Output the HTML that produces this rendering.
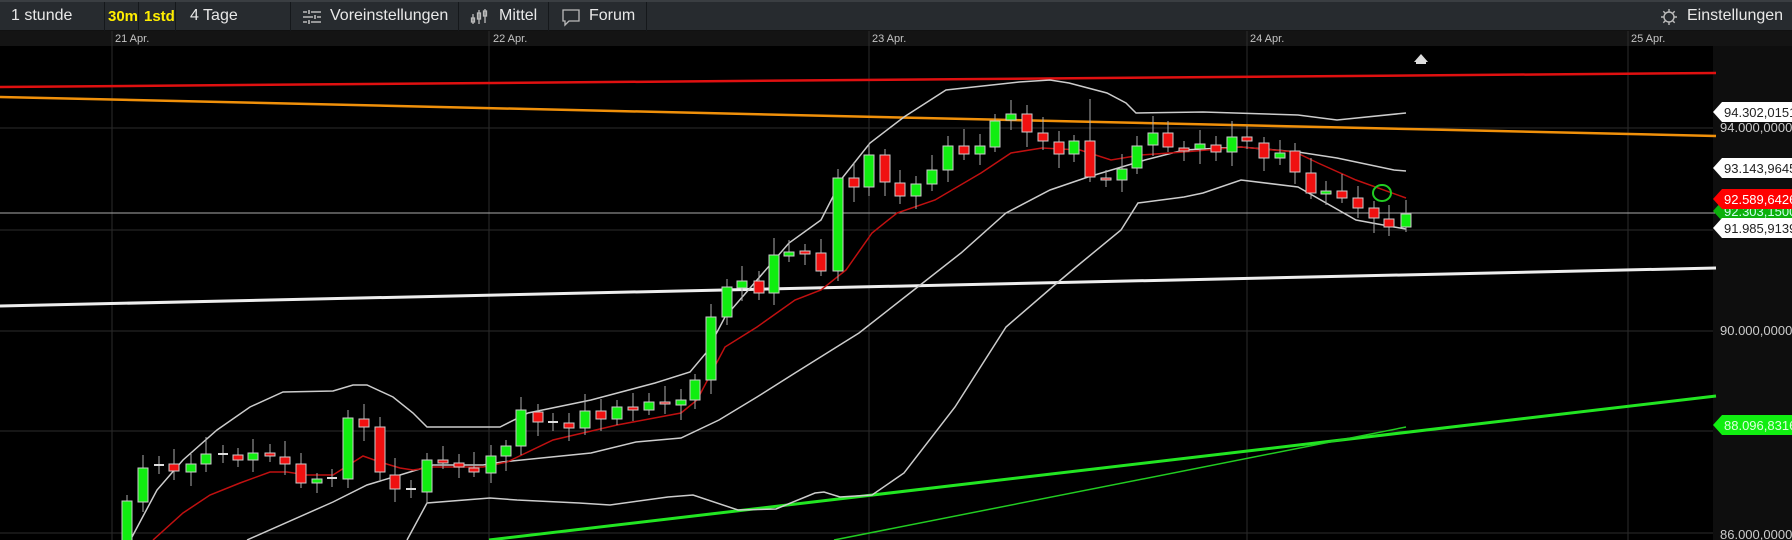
<!DOCTYPE html>
<html><head><meta charset="utf-8"><style>
*{margin:0;padding:0;box-sizing:border-box}
body{width:1792px;height:540px;background:#000;overflow:hidden;font-family:"Liberation Sans",sans-serif;position:relative}
#tb{position:absolute;left:0;top:0;width:1792px;height:31px;background:#272b2f;border-top:2px solid #3a3e42;border-bottom:1px solid #111}
.t{position:absolute;top:5px;font-size:16px;color:#e8e8e8;white-space:nowrap}
.sep{position:absolute;top:0;width:1px;height:29px;background:#15181b}
.y{color:#ffee00;font-weight:bold;font-size:15px}
#dr{position:absolute;left:0;top:31px;width:1792px;height:15px;background:#141414}
.d{position:absolute;top:2px;font-size:11px;color:#c4c4c4}
#ax{position:absolute;left:1713px;top:46px;width:79px;height:494px;background:#0e0e0e}
svg{position:absolute;left:0;top:0}
</style></head><body>
<div id="tb">
<div class="t" style="left:11px">1 stunde</div>
<div class="sep" style="left:104px"></div>
<div class="t y" style="left:108px;top:6px">30m</div>
<div class="sep" style="left:138px"></div>
<div class="t y" style="left:144px;top:6px">1std</div>
<div class="sep" style="left:175px"></div>
<div class="t" style="left:190px">4 Tage</div>
<div class="sep" style="left:290px"></div>
<svg style="left:302px;top:7px" width="20" height="16" viewBox="0 0 20 16"><g stroke="#bbb" stroke-width="1.6"><path d="M1 3h4M9 3h10M7 1v4M1 8h10M15 8h4M13 6v4M1 13h4M9 13h10M7 11v4"/></g></svg>
<div class="t" style="left:330px">Voreinstellungen</div>
<div class="sep" style="left:458px"></div>
<svg style="left:470px;top:6px" width="20" height="18" viewBox="0 0 20 18"><g stroke="#bbb" stroke-width="1.3" fill="none"><path d="M3 6v10M9 2v14M15 1v14"/><rect x="1.5" y="10" width="3" height="4"/><rect x="7.5" y="5" width="3" height="6"/><rect x="13.5" y="3" width="3" height="5"/></g></svg>
<div class="t" style="left:499px">Mittel</div>
<div class="sep" style="left:548px"></div>
<svg style="left:561px;top:7px" width="20" height="18" viewBox="0 0 20 18"><path d="M2 1h16v11H8l-4 4v-4H2z" stroke="#bbb" stroke-width="1.3" fill="none"/></svg>
<div class="t" style="left:589px">Forum</div>
<div class="sep" style="left:646px"></div>
<svg style="left:1660px;top:6px" width="18" height="18" viewBox="0 0 18 18"><g stroke="#bbb" stroke-width="1.4" fill="none"><circle cx="9" cy="9" r="5"/><path d="M9 1v3M9 14v3M1 9h3M14 9h3M3.3 3.3l2 2M12.7 12.7l2 2M3.3 14.7l2-2M12.7 5.3l2-2"/></g></svg>
<div class="t" style="left:1687px">Einstellungen</div>
</div>
<div id="dr">
<div class="d" style="left:115px">21 Apr.</div>
<div class="d" style="left:493px">22 Apr.</div>
<div class="d" style="left:872px">23 Apr.</div>
<div class="d" style="left:1250px">24 Apr.</div>
<div class="d" style="left:1631px">25 Apr.</div>
</div>
<div id="ax"></div>
<svg id="c" width="1792" height="540" style="top:0"></svg>
<script>
var s='';
function L(d,c,w){s+='<path d="'+d+'" stroke="'+c+'" stroke-width="'+w+'" fill="none"/>';}
[112,489,869,1247,1628].forEach(function(x){s+='<line x1="'+x+'" y1="31" x2="'+x+'" y2="540" stroke="#2b2b2b" stroke-width="1"/>';});
[128,230,331,431,533].forEach(function(y){s+='<line x1="0" y1="'+y+'" x2="1713" y2="'+y+'" stroke="#2b2b2b" stroke-width="1"/>';});
L('M0 87L1716 73','#e01010',2.5);
L('M0 97L1716 136','#f0900a',2.5);
L('M0 213L1716 213','#aaa',1);
L('M0 306L1716 268','#eee',3);
L('M489 540L1716 396','#22e622',3);
L('M834 540L1406 427','#22cc22',1.5);
L('M132 537L157 490L183 460L217 430L250 407L283 392L333 391L353 385L367 385L393 397L413 413L427 427L500 427L528 413L591 400L655 383L690 372L706 353L725 317L757 280L789 243L821 220L843 177L870 143L904 117L946 90L1019 82L1050 80L1069 83L1107 93L1126 103L1136 113L1203 112L1298 115L1337 120L1406 113','#ccc',1.5);
L('M247 540L333 502L367 485L400 475L433 465L483 465L502 462L591 453L636 442L681 438L719 420L757 397L795 373L859 333L910 293L961 253L1006 213L1050 190L1088 177L1145 160L1184 150L1241 147L1298 152L1337 158L1394 170L1406 171','#ccc',1.5);
L('M407 540L427 503L490 498L517 500L579 503L610 505L668 497L693 495L738 510L776 509L815 493L824 492L840 497L872 495L904 473L955 407L1006 327L1057 283L1076 267L1121 230L1138 203L1184 197L1203 193L1241 180L1298 187L1356 220L1394 227L1406 229','#ccc',1.5);
L('M153 540L183 513L210 495L240 483L270 472L287 472L307 475L333 475L363 456L380 462L400 468L413 470L433 467L483 467L507 462L553 440L617 425L681 413L697 400L725 347L757 327L795 300L821 290L846 270L872 233L897 213L935 200L981 173L1011 153L1042 148L1080 150L1111 160L1141 155L1184 152L1241 147L1295 152L1318 163L1356 180L1406 198','#c01010',1.5);
var C=[[127,'g',501,545],[143,'g',468,502],[159,'d',465],[174,'r',464,471],[191,'g',464,472],[206,'g',454,464],[223,'d',454],[238,'r',455,460],[253,'g',453,460],[270,'r',453,456],[285,'r',457,464],[301,'r',464,483],[317,'g',479,483],[332,'d',478],[348,'g',418,479],[364,'r',419,427],[380,'r',427,472],[395,'r',475,489],[411,'d',489],[427,'g',460,492],[443,'r',460,463],[459,'r',463,467],[474,'r',468,472],[491,'g',456,473],[506,'g',446,456],[521,'g',410,446],[538,'r',412,422],[553,'d',422],[569,'r',423,428],[585,'g',411,428],[601,'r',411,419],[617,'g',407,419],[633,'r',407,410],[649,'g',402,410],[665,'r',402,404],[681,'g',400,405],[695,'g',380,400],[711,'g',317,380],[727,'g',287,317],[742,'g',281,288],[759,'r',281,293],[774,'g',255,293],[789,'g',252,256],[805,'r',251,254],[821,'r',253,271],[838,'g',178,271],[854,'r',178,187],[869,'g',155,187],[885,'r',155,182],[900,'r',183,196],[916,'g',184,196],[932,'g',170,184],[948,'g',146,170],[964,'r',146,154],[980,'g',146,154],[995,'g',121,147],[1011,'g',114,120],[1027,'r',114,132],[1043,'r',133,141],[1059,'r',142,154],[1074,'g',141,154],[1090,'r',141,177,99,182],[1106,'r',178,180],[1122,'g',169,180],[1137,'g',146,168],[1153,'g',133,145],[1168,'r',133,147],[1184,'r',148,151],[1200,'g',144,149],[1216,'r',145,152],[1232,'g',137,152],[1247,'r',137,141],[1264,'r',143,158],[1280,'g',153,158],[1295,'r',151,172],[1311,'r',173,193],[1326,'g',191,194],[1342,'r',191,198],[1358,'r',198,208],[1374,'r',208,218],[1389,'r',219,227],[1406,'g',214,227,200,232]];
C.forEach(function(c,i){var x=c[0];
 if(c[1]=='d'){s+='<line x1="'+x+'" y1="'+(c[2]-9)+'" x2="'+x+'" y2="'+(c[2]+9)+'" stroke="#aaa"/><line x1="'+(x-5)+'" y1="'+c[2]+'" x2="'+(x+5)+'" y2="'+c[2]+'" stroke="#ddd" stroke-width="2"/>';return;}
 var t=c[2],b=c[3],h=c[4]||t-(6+(i*7)%12),l=c[5]||b+(5+(i*5)%11);
 s+='<line x1="'+x+'" y1="'+h+'" x2="'+x+'" y2="'+l+'" stroke="#aaa"/>';
 s+='<rect x="'+(x-5)+'" y="'+t+'" width="10" height="'+Math.max(2,b-t)+'" fill="'+(c[1]=='g'?'#10ee10':'#f01010')+'" stroke="#ccc" stroke-width="1"/>';
});
s+='<ellipse cx="1382" cy="193" rx="9" ry="8" stroke="#22cc22" stroke-width="2" fill="none"/>';
s+='<path d="M1414 62L1421 54L1428 62Z" fill="#ddd"/><rect x="1416" y="62" width="10" height="2" fill="#ddd"/>';
function txt(x,y,t,c){s+='<text x="'+x+'" y="'+y+'" font-size="13" fill="'+c+'" font-family="Liberation Sans,sans-serif">'+t+'</text>';}
txt(1720,132,'94.000,0000','#ccc');txt(1720,335,'90.000,0000','#ccc');txt(1720,539,'86.000,0000','#ccc');
function tag(y,bg,fg,t){s+='<path d="M1713 '+y+'L1722 '+(y-10)+'L1792 '+(y-10)+'L1792 '+(y+10)+'L1722 '+(y+10)+'Z" fill="'+bg+'"/>';txt(1724,y+5,t,fg);}
tag(211,'#0cb00c','#cfe','92.303,1500');
tag(112,'#fff','#222','94.302,0151');
tag(168,'#fff','#222','93.143,9645');
tag(199,'#ff0000','#fff','92.589,6426');
tag(228,'#fff','#222','91.985,9139');
tag(425,'#11ee11','#dfd','88.096,8316');
document.getElementById('c').innerHTML=s;
</script>
</body></html>
